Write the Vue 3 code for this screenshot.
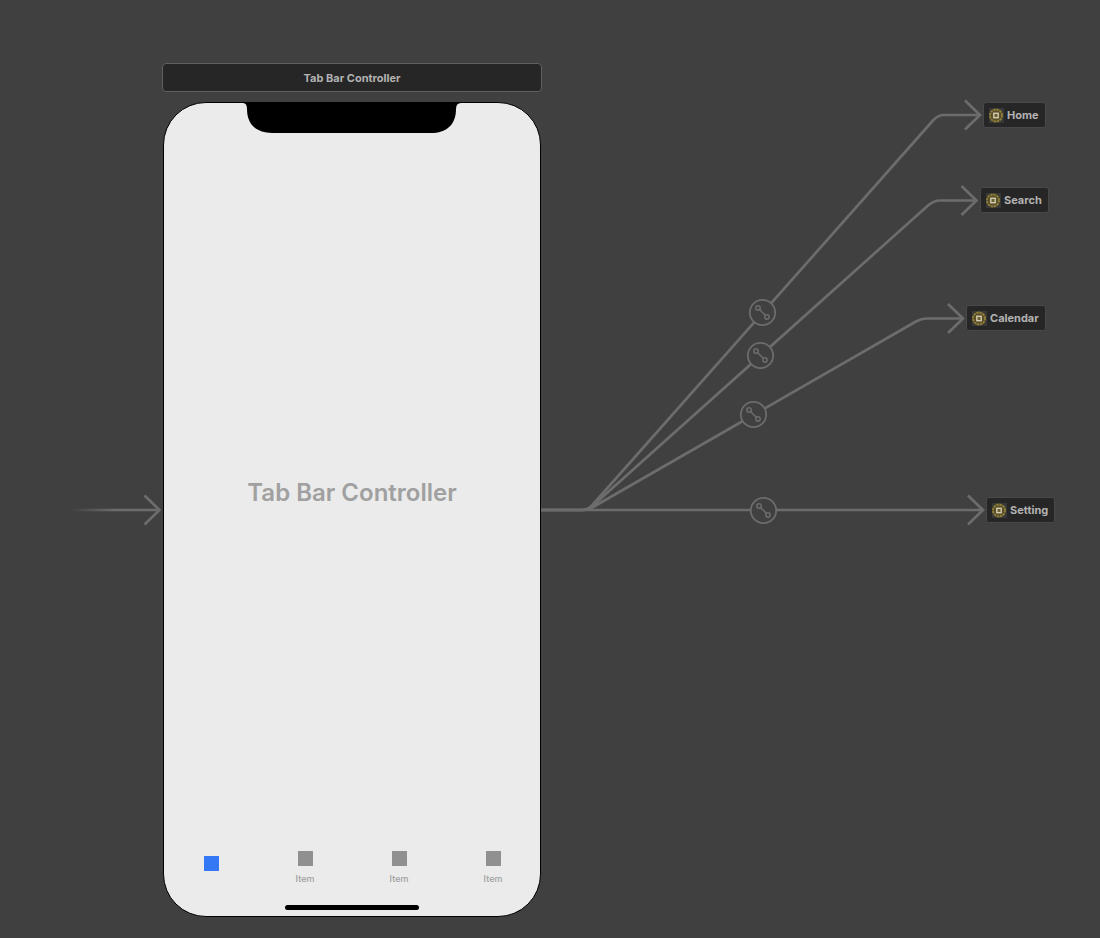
<script setup>
const scenes = [
  { name: 'Home', x: 983, y: 102 },
  { name: 'Search', x: 980, y: 187 },
  { name: 'Calendar', x: 966, y: 305 },
  { name: 'Setting', x: 986, y: 497 }
]

const segues = [
  { path: 'M541 510H582Q588 510 592 505.5L933 120.5Q938 115 944 115H979', tip: [981, 115], badge: [762.5, 312.5] },
  { path: 'M541 510H582Q588 510 593 505.5L928 205.5Q934 200.5 940 200.5H976', tip: [977.5, 200.5], badge: [760.5, 355.5] },
  { path: 'M541 510H582Q588 510 594 506.5L916 321.5Q921 318.5 927 318.5H962', tip: [964, 318.5], badge: [753.5, 414.5] },
  { path: 'M541 510H982', tip: [984, 510], badge: [763.5, 510.5] }
]

const tabs = [
  { title: '', selected: true },
  { title: 'Item', selected: false },
  { title: 'Item', selected: false },
  { title: 'Item', selected: false }
]
</script>

<template>
  <main class="canvas">
    <svg class="edges" width="1100" height="938" viewBox="0 0 1100 938" aria-hidden="true">
      <defs>
        <linearGradient id="entry" gradientUnits="userSpaceOnUse" x1="70" y1="0" x2="115" y2="0">
          <stop offset="0" stop-color="#6c6c6c" stop-opacity="0" />
          <stop offset="1" stop-color="#6c6c6c" />
        </linearGradient>
      </defs>
      <rect x="70" y="508.7" width="89" height="2.6" fill="url(#entry)" />
      <path class="line" d="M144.5 495.5L159.5 510L144.5 524.5" />
      <g v-for="(segue, i) in segues" :key="i">
        <path class="line" :d="segue.path" />
        <path class="line" :transform="`translate(${segue.tip[0]} ${segue.tip[1]})`" d="M-16 -14.5L-1 0L-16 14.5" />
      </g>
      <g v-for="(segue, i) in segues" :key="`badge-${i}`" :transform="`translate(${segue.badge[0]} ${segue.badge[1]})`">
        <circle class="ring" r="12.7" />
        <circle class="dot" cx="-4.5" cy="-4.5" r="2.2" />
        <circle class="dot" cx="4.5" cy="4.5" r="2.2" />
        <path class="link" d="M-3 -3L3 3" />
      </g>
    </svg>

    <section class="controller">
      <header class="title-bar">Tab Bar Controller</header>
      <div class="phone">
        <svg class="notch" width="218" height="30" viewBox="0 0 218 30" aria-hidden="true">
          <path d="M0 0H218Q213 0 213 6C213 22 203 30 188 30H29C14 30 4 22 4 6Q4 0 0 0Z" />
        </svg>
        <h1 class="placeholder">Tab Bar Controller</h1>
        <nav class="tabs">
          <button v-for="(tab, i) in tabs" :key="i" type="button" class="tab" :class="{ selected: tab.selected }" :aria-label="tab.title || 'Selected tab'">
            <span class="glyph"></span>
            <span v-if="tab.title" class="caption">{{ tab.title }}</span>
          </button>
        </nav>
        <div class="indicator"></div>
      </div>
    </section>

    <button v-for="scene in scenes" :key="scene.name" type="button" class="scene" :style="{ left: `${scene.x}px`, top: `${scene.y}px` }">
      <svg width="15" height="15" viewBox="0 0 15 15" aria-hidden="true">
        <rect width="15" height="15" fill="#383838" />
        <circle cx="7" cy="7.5" r="5" fill="#5b5028" />
        <circle cx="7" cy="7.5" r="6" fill="none" stroke="#655a2c" stroke-width="1.8" />
        <circle cx="7" cy="7.5" r="6" fill="none" stroke="#93823c" stroke-width="1.8" stroke-dasharray="1.9 1.24" />
        <rect x="4.8" y="5.3" width="4.4" height="4.4" fill="#6b6030" stroke="#d2cbb0" stroke-width="1.4" />
      </svg>
      {{ scene.name }}
    </button>
  </main>
</template>

<style>
body {
  background: #404040;
}
</style>

<style scoped>
.canvas {
  position: relative;
  min-height: 100vh;
  overflow: hidden;
  background: #404040;
  font-family: Inter, "Liberation Sans", sans-serif;
}
.edges {
  position: absolute;
  left: 0;
  top: 0;
}
.line {
  fill: none;
  stroke: #6c6c6c;
  stroke-width: 2.7;
}
.ring {
  fill: #404040;
  stroke: #6c6c6c;
  stroke-width: 1.8;
}
.dot,
.link {
  fill: none;
  stroke: #6c6c6c;
  stroke-width: 1.5;
}
.controller {
  position: absolute;
  left: 162px;
  top: 63px;
  width: 380px;
  display: flex;
  flex-direction: column;
  gap: 10px;
}
.title-bar {
  box-sizing: border-box;
  padding-top: 1px;
  border: 1px solid #606060;
  border-radius: 4px;
  background: #262626;
  color: #b2b2b2;
  font-size: 11px;
  font-weight: 700;
  line-height: 26px;
  text-align: center;
}
.phone {
  position: relative;
  box-sizing: border-box;
  margin: 0 1px;
  aspect-ratio: 378 / 815;
  display: flex;
  flex-direction: column;
  align-items: center;
  border: 1px solid #000;
  border-radius: 43px;
  background: #ebebeb;
}
.notch {
  display: block;
}
.placeholder {
  flex: 1;
  display: flex;
  align-items: center;
  margin: 0;
  color: #a0a0a0;
  font-size: 24px;
  font-weight: 600;
}
.tabs {
  align-self: stretch;
  display: grid;
  grid-template-columns: repeat(4, 1fr);
  align-items: center;
  margin-bottom: 20px;
}
.tab {
  display: flex;
  flex-direction: column;
  align-items: center;
  gap: 7px;
  padding: 0;
  border: 0;
  background: none;
  color: #a0a0a0;
  font: 500 9px/12px Inter, "Liberation Sans", sans-serif;
}
.glyph {
  width: 15px;
  height: 15px;
  background: #909090;
}
.selected .glyph {
  background: #3478f6;
  margin-bottom: 9px;
}
.indicator {
  width: 134px;
  height: 5px;
  margin-bottom: 6px;
  border-radius: 3px;
  background: #000;
}
.scene {
  position: absolute;
  display: flex;
  align-items: center;
  gap: 3px;
  padding: 0 6px 0 5px;
  border: 1px solid #484848;
  border-radius: 3px;
  background: #262626;
  color: #b2b2b2;
  font: 700 11px/24px Inter, "Liberation Sans", sans-serif;
}
</style>
